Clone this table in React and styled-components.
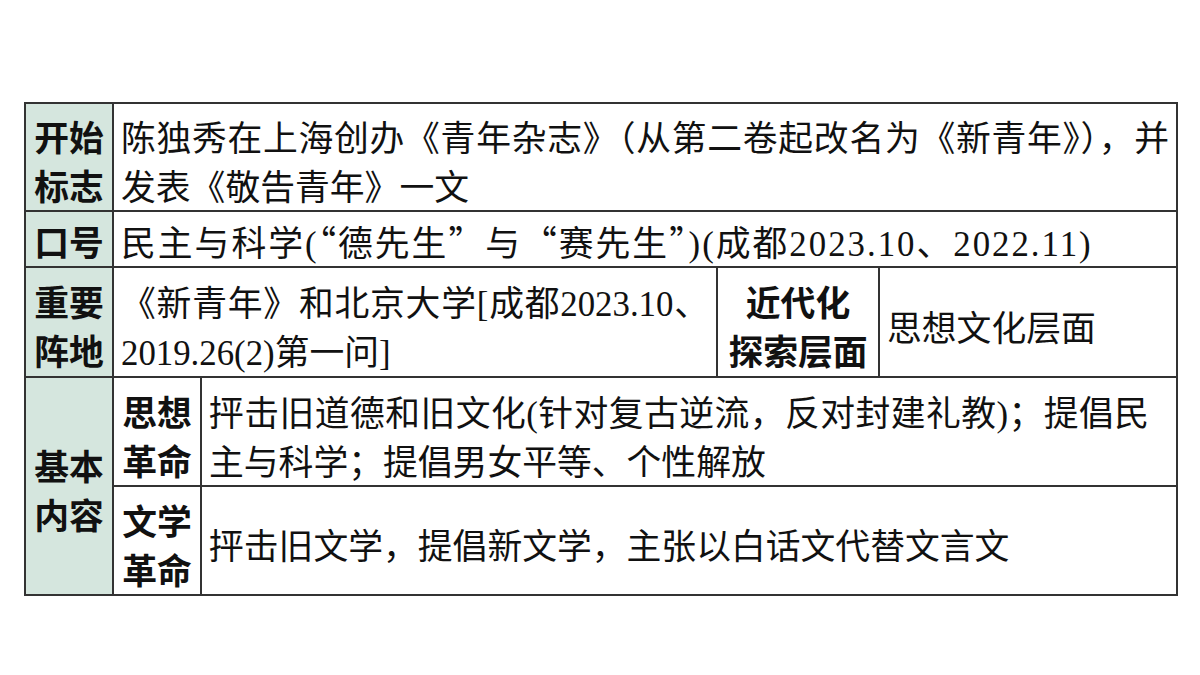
import styled, { createGlobalStyle } from "styled-components";

const GlobalStyle = createGlobalStyle`
    html, body {
        margin: 0;
        padding: 0;
        background: #fff;
    }
`;

const Page = styled.div`
    padding: 102px 0 0 24px;
`;

const Table = styled.table`
    width: 1152px;
    border-collapse: collapse;
    table-layout: fixed;
    font-family: "Noto Sans CJK SC", sans-serif;
    font-size: 34.8px;
    color: #111;
`;

const Row = styled.tr`
    height: ${props => props.$h}px;
`;

const Cell = styled.td`
    border: 2px solid #333;
    padding: ${props => props.$top ?? 8}px 7px 0;
    line-height: 49px;
    vertical-align: middle;
    text-align: ${props => (props.$center ? "center" : "left")};
    font-weight: ${props => (props.$bold ? 700 : 400)};
    letter-spacing: ${props => props.$spread || 0}px;
    background: #fff;
`;

const Label = styled(Cell).attrs({ as: "th" })`
    background: #d5e6de;
    text-align: center;
    font-weight: 700;
    padding-left: 0;
    padding-right: 0;
`;

const Line = styled.div`
    height: 49px;
    white-space: nowrap;
    letter-spacing: ${props => props.$spread || 0}px;
    text-align: ${props => (props.$fill ? "justify" : "inherit")};
    text-align-last: ${props => (props.$fill ? "justify" : "auto")};
`;

const Num = styled.span`
    font-family: "Liberation Serif", serif;
    line-height: 1;
`;

export default function App() {
    return (
        <>
            <GlobalStyle />
            <Page>
                <Table>
                    <colgroup>
                        <col style={{ width: 88 }} />
                        <col style={{ width: 88 }} />
                        <col style={{ width: 516 }} />
                        <col style={{ width: 162 }} />
                        <col style={{ width: 298 }} />
                    </colgroup>
                    <tbody>
                        <Row $h={108}>
                            <Label>
                                <Line>开始</Line>
                                <Line>标志</Line>
                            </Label>
                            <Cell colSpan={4}>
                                <Line $fill>陈独秀在上海创办《青年杂志》（从第二卷起改名为《新青年》），并</Line>
                                <Line>发表《敬告青年》一文</Line>
                            </Cell>
                        </Row>
                        <Row $h={55}>
                            <Label $top={5}>口号</Label>
                            <Cell colSpan={4} $top={5} $spread={2}>
                                民主与科学<Num>(</Num>“德先生”与“赛先生”<Num>)(</Num>成都<Num>2023.10</Num>、<Num>2022.11)</Num>
                            </Cell>
                        </Row>
                        <Row $h={110}>
                            <Label>
                                <Line>重要</Line>
                                <Line>阵地</Line>
                            </Label>
                            <Cell colSpan={2}>
                                <Line $fill>《新青年》和北京大学<Num>[</Num>成都<Num>2023.10</Num>、</Line>
                                <Line><Num>2019.26(2)</Num>第一问<Num>]</Num></Line>
                            </Cell>
                            <Cell $center $bold>
                                <Line>近代化</Line>
                                <Line>探索层面</Line>
                            </Cell>
                            <Cell>思想文化层面</Cell>
                        </Row>
                        <Row $h={109}>
                            <Label rowSpan={2}>
                                <Line>基本</Line>
                                <Line>内容</Line>
                            </Label>
                            <Cell $center $bold>
                                <Line>思想</Line>
                                <Line>革命</Line>
                            </Cell>
                            <Cell colSpan={3}>
                                <Line $spread={0.45}>抨击旧道德和旧文化<Num>(</Num>针对复古逆流，反对封建礼教<Num>)</Num>；提倡民</Line>
                                <Line>主与科学；提倡男女平等、个性解放</Line>
                            </Cell>
                        </Row>
                        <Row $h={109}>
                            <Cell $center $bold>
                                <Line>文学</Line>
                                <Line>革命</Line>
                            </Cell>
                            <Cell colSpan={3}>抨击旧文学，提倡新文学，主张以白话文代替文言文</Cell>
                        </Row>
                    </tbody>
                </Table>
            </Page>
        </>
    );
}
